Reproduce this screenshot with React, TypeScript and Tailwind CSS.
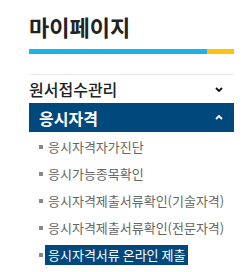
import React from "react";

const Chevron = ({ up, color }: { up?: boolean; color: string }) => (
  <svg width="8" height="5" viewBox="0 0 8 5" className="block">
    <path
      d={up ? "M1 4 L4 1 L7 4" : "M1 1 L4 4 L7 1"}
      fill="none"
      stroke={color}
      strokeWidth="1.8"
    />
  </svg>
);

const items = [
  "응시자격자가진단",
  "응시가능종목확인",
  "응시자격제출서류확인(기술자격)",
  "응시자격제출서류확인(전문자격)",
];

export default function App() {
  return (
    <div
      className="w-[250px] h-[272px] bg-white pl-[29px] pr-[16px] overflow-hidden"
      style={{ fontFamily: '"Noto Sans CJK KR", "Noto Sans", sans-serif' }}
    >
      <div className="pt-[11px] text-[22px] leading-[30px] font-bold text-[#222]">마이페이지</div>
      <div className="mt-[8px] flex h-[5px]">
        <div className="flex-1 bg-[#1fb2e6]" />
        <div className="w-[27px] bg-[#fdc30b]" />
      </div>
      <div className="mt-[20px] border-t border-[#ececec]" />
      <div className="flex h-[28px] items-center justify-between text-[16px] font-medium text-[#222] pr-[11px]">
        <span>원서접수관리</span>
        <Chevron color="#111" />
      </div>
      <div className="flex h-[29px] items-center justify-between bg-[#01497c] pl-[10px] pr-[11px] text-[16px] font-bold text-white">
        <span>응시자격</span>
        <Chevron up color="#fff" />
      </div>
      <ul className="pt-[1px]">
        {items.map((t) => (
          <li key={t} className="flex h-[27px] items-center pl-[10px] text-[13px] text-[#666]">
            <span className="mr-[5px] h-[4px] w-[4px] bg-[#888]" />
            <span>{t}</span>
          </li>
        ))}
        <li className="flex h-[27px] items-center pl-[10px] text-[13px]">
          <span className="mr-[2px] h-[4px] w-[4px] bg-[#888]" />
          <span className="bg-[#01497c] px-[3px] leading-[20px] text-white">응시자격서류 온라인 제출</span>
        </li>
      </ul>
    </div>
  );
}
